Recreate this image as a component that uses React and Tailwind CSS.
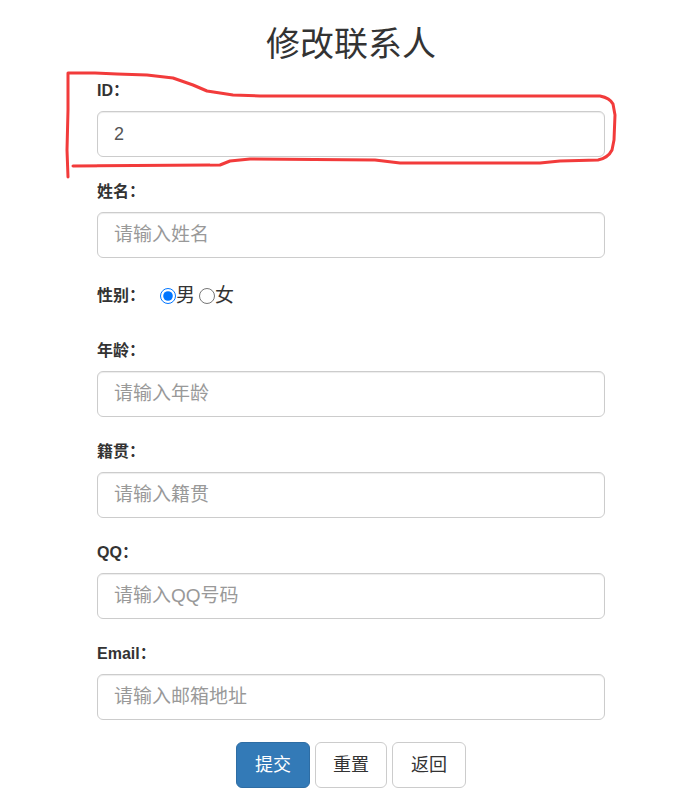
import React from 'react';

const fields = [
  { label: 'ID：', value: '2' },
  { label: '姓名：', placeholder: '请输入姓名' },
];

const moreFields = [
  { label: '年龄：', placeholder: '请输入年龄' },
  { label: '籍贯：', placeholder: '请输入籍贯' },
  { label: 'QQ：', placeholder: '请输入QQ号码' },
  { label: 'Email：', placeholder: '请输入邮箱地址' },
];

const Field = ({ label, value, placeholder }) => (
  <div className="mb-[23px]">
    <label className="block h-[24px] leading-[24px] text-[16px] font-bold mb-[8px]">{label}</label>
    <input
      type="text"
      defaultValue={value}
      placeholder={placeholder}
      className="block w-full h-[46px] px-[16px] text-[18px] placeholder:text-[19px] text-[#555] placeholder:text-[#999] bg-white border border-[#ccc] rounded-[6px] shadow-[inset_0_1px_1px_rgba(0,0,0,0.075)] outline-none"
    />
  </div>
);

export default function App() {
  return (
    <div className="relative min-h-[805px] bg-white text-[#333] font-['Liberation_Sans','Noto_Sans_CJK_SC',sans-serif]">
      <form className="w-[508px] ml-[97px] pt-[24px]" onSubmit={(e) => e.preventDefault()}>
        <h1 className="h-[40px] leading-[40px] text-[34px] font-normal text-center mb-[15px]">修改联系人</h1>

        {fields.map((f) => <Field key={f.label} {...f} />)}

        {/* gender */}
        <div className="flex items-center h-[30px] mb-[28px] text-[16px]">
          <span className="font-bold leading-[24px]">性别：</span>
          <input type="radio" name="sex" defaultChecked className="w-4 h-4 m-0 ml-[15px]" />
          <span className="text-[19px]">男</span>
          <input type="radio" name="sex" className="w-4 h-4 m-0 ml-[4px]" />
          <span className="text-[19px]">女</span>
        </div>

        {moreFields.map((f) => <Field key={f.label} {...f} />)}

        {/* actions */}
        <div className="flex justify-center gap-[5px] -mt-[1px]">
          <button type="submit" className="h-[46px] px-[18px] text-[18px] text-white bg-[#337ab7] border border-[#2e6da4] rounded-[6px]">提交</button>
          <button type="reset" className="h-[46px] px-[17px] text-[18px] text-[#333] bg-white border border-[#ccc] rounded-[6px]">重置</button>
          <button type="button" className="h-[46px] px-[18px] text-[18px] text-[#333] bg-white border border-[#ccc] rounded-[6px]">返回</button>
        </div>
      </form>

      {/* hand-drawn red annotation */}
      <svg className="absolute left-0 top-0 pointer-events-none" width="696" height="805" viewBox="0 0 696 805">
        <path
          d="M68 177 L67 150 L68 110 L68 73 L95 73 L117 74 L147 75 L173 78 L193 85 L207 91 L233 95 L260 96 L560 96 L600 96 Q610 98 613 104 L615 115 L614 140 L612 150 Q608 158 598 160 L560 161 L540 163 L400 163 L375 160 L250 159 L230 161 L220 165 L73 166"
          fill="none"
          stroke="#f23b3b"
          strokeWidth="3"
          strokeLinecap="round"
          strokeLinejoin="round"
        />
      </svg>
    </div>
  );
}
